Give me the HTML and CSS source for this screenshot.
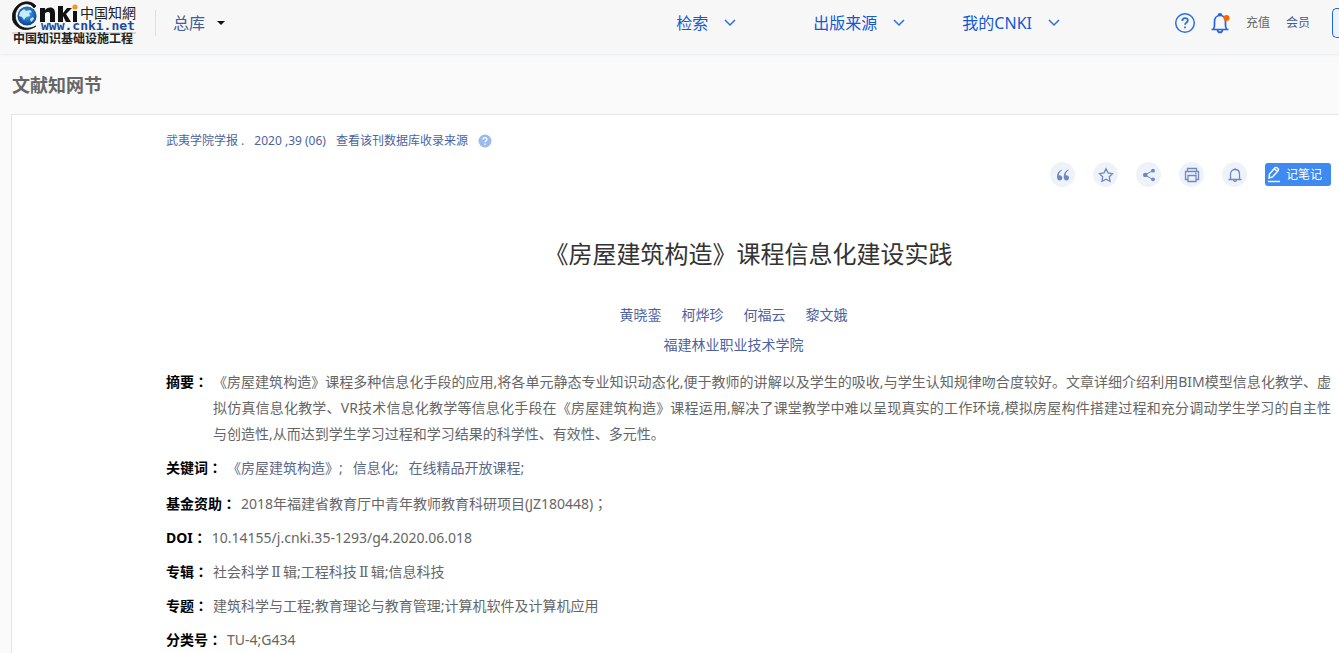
FILE: index.html
```html
<!DOCTYPE html>
<html lang="zh-CN">
<head>
<meta charset="utf-8">
<title>《房屋建筑构造》课程信息化建设实践</title>
<link rel="stylesheet" href="styles.css">
</head>
<body>
<header class="topbar">
  <a class="logo" href="#" aria-label="中国知网">
    <svg width="128" height="46" viewBox="0 0 128 46">
      <defs><radialGradient id="globe" cx="50%" cy="40%" r="60%"><stop offset="0" stop-color="#5fbdf0"/><stop offset=".5" stop-color="#2273c4"/><stop offset="1" stop-color="#0c3f92"/></radialGradient></defs>
      <path d="M24 6C20 1 11 0 5 6C-2 13-1 23 6 27C11 31 19 30 24 26C18 29 11 29 7 25C2 20 2 12 7 7C12 2 19 3 22 8Z" fill="#111" stroke="#111" stroke-width=".8"/>
      <circle cx="15" cy="16" r="9.600" fill="url(#globe)"/>
      <path d="M8 12l4-3 2 2 4-1 2 2-3 1 1 3-4 1-2 3-2-3-3-1zM18 19l3-2 1 2-3 3z" fill="#c9eafa"/>
      <path d="M28 22V8h5v2c4-4 10-3 10 3v9h-5v-8c0-3-5-2-5 0v8zM46 6h5v7l4-5h5l-6 6 5 8h-5l-3-6v6h-5zM61 11h4v11h-4z" fill="#111"/>
      <circle cx="63" cy="7" r="2.600" fill="#f39a1c"/>
      <text class="logo-brush" x="68" y="18">中国知網</text>
      <text class="logo-url" x="29" y="30">www.cnki.net</text>
      <path d="M0 33H124" stroke="#bbb"/>
      <text class="logo-sub" x="1" y="43">中国知识基础设施工程</text>
    </svg>
  </a>
  <button class="library" type="button">总库<span class="caret"></span></button>
  <nav class="menu">
    <a href="#">检索<svg width="14" height="10" viewBox="0 0 14 10"><path d="M2 2l5 5 5-5"/></svg></a>
    <a href="#">出版来源<svg width="14" height="10" viewBox="0 0 14 10"><path d="M2 2l5 5 5-5"/></svg></a>
    <a class="mine" href="#">我的CNKI<svg width="14" height="10" viewBox="0 0 14 10"><path d="M2 2l5 5 5-5"/></svg></a>
  </nav>
  <div class="account">
    <button type="button" class="plain" aria-label="帮助"><svg width="22" height="22" viewBox="0 0 22 22" fill="none" stroke="#2c6fe0" stroke-width="1.500"><circle cx="11" cy="11" r="9.300"/><path d="M8.300 9c0-4 5.500-3.500 5.500-.5 0 2-2.800 2-2.800 4.300" stroke-width="1.800"/><path d="M11 14.500v1.800" stroke-width="1.800"/></svg></button>
    <button type="button" class="plain" aria-label="消息"><svg width="20" height="22" viewBox="0 0 20 22" fill="none" stroke="#1f66e5" stroke-width="1.700"><path d="M1.500 17.500h17M3.500 17c1.500-2 1-4 1-7.500 0-3.500 2-6 5.500-6s5.500 2.500 5.500 6c0 3.500-.5 5.500 1 7.500M8.500 3.300a1.500 1.500 0 0 1 3 0M7.500 18c.5 3.200 4.500 3.200 5 0"/><circle cx="16.500" cy="6" r="3" fill="#ff6400" stroke="none"/></svg></button>
    <a href="#">充值</a>
    <a class="member" href="#">会员</a>
  </div>
  <button class="login" type="button" aria-label="登录"></button>
</header>
<h1 class="page-name">文献知网节</h1>
<main class="paper">
  <p class="source"><a href="#">武夷学院学报 .</a><a href="#">2020 ,39 (06)</a><a href="#">查看该刊数据库收录来源</a>
    <svg width="14" height="14" viewBox="0 0 14 14"><circle cx="7" cy="7" r="6.500" fill="#9dbbea"/><path d="M5 5.600c0-2.800 4-2.500 4-.3C9 6.700 7 6.700 7 8.300M7 9.500V11" fill="none" stroke="#fff" stroke-width="1.300"/></svg></p>
  <div class="tools">
    <button type="button" aria-label="引用"><svg width="16" height="16" viewBox="0 0 16 16" fill="#6d88c3"><path d="M7 2.500C4 3.500 2 6 2 9.500 2 12 3 13.500 4.700 13.500S7.300 12.300 7.300 10.800 6.300 8.200 4.500 8.200C4.200 8.200 4 8.300 3.800 8.400 4 6.200 5 4.500 7 3.300zM13.700 2.500c-3 1-5 3.500-5 7 0 2.500 1 4 2.700 4s2.600-1.200 2.600-2.700-1-2.600-2.800-2.600c-.3 0-.5.100-.7.200.2-2.200 1.200-3.900 3.200-5.100z"/></svg></button>
    <button type="button" aria-label="收藏"><svg width="16" height="16" viewBox="0 0 16 16" class="line"><path d="M8 1.800l2 4.100 4.500.7-3.200 3.200.7 4.500-4-2.100-4 2.100.7-4.500L1.500 6.600 6 5.900z"/></svg></button>
    <button type="button" aria-label="分享"><svg width="16" height="16" viewBox="0 0 16 16" class="line"><path d="M12 3.500L4 8l8 4.500" stroke-width="1"/><g fill="#6d88c3" stroke="none"><circle cx="4.300" cy="8" r="2.300"/><circle cx="12" cy="3.700" r="1.900"/><circle cx="12" cy="12.300" r="1.900"/></g></svg></button>
    <button type="button" aria-label="打印"><svg width="16" height="16" viewBox="0 0 16 16" class="line"><path d="M3.500 4.500v-3h9v3M4 12.500H1.500v-8h13v8H12M4 8.500h8v6H4zM11 6.500h1.500"/></svg></button>
    <button type="button" aria-label="提醒"><svg width="16" height="16" viewBox="0 0 16 16" class="line"><path d="M1.500 12.500h13M3.500 12V7c0-6 9-6 9 0v5M6.500 13c.3 2 2.700 2 3 0M8 1v1.500"/></svg></button>
    <button type="button" class="note"><svg width="16" height="18" viewBox="0 0 16 18" fill="none" stroke="#fff" stroke-width="1.400"><path d="M3 12l.5-4L9 1.800c1.200-1.200 4.500 1.200 3.300 2.700L6.500 11zM8.500 3l3 2.500"/><path d="M2 15.500h12"/></svg>记笔记</button>
  </div>
  <div class="article">
    <h2>《房屋建筑构造》课程信息化建设实践</h2>
    <p class="authors"><a href="#">黄晓銮</a><a href="#">柯烨珍</a><a href="#">何福云</a><a href="#">黎文娥</a></p>
    <p class="school"><a href="#">福建林业职业技术学院</a></p>
  </div>
  <dl class="facts">
    <div class="abstract"><dt>摘要<span class="mark" lang="zh-Hant">：</span></dt><dd>《房屋建筑构造》课程多种信息化手段的应用,将各单元静态专业知识动态化,便于教师的讲解以及学生的吸收,与学生认知规律吻合度较好。文章详细介绍利用BIM模型信息化教学、虚拟仿真信息化教学、VR技术信息化教学等信息化手段在《房屋建筑构造》课程运用,解决了课堂教学中难以呈现真实的工作环境,模拟房屋构件搭建过程和充分调动学生学习的自主性<span class="together">与创造性</span>,从而达到学生学习过程和学习结果的科学性、有效性、多元性。</dd></div>
    <div class="keywords"><dt>关键词<span class="mark" lang="zh-Hant">：</span></dt><dd><a href="#">《房屋建筑构造》;</a><a href="#">信息化;</a><a href="#">在线精品开放课程;</a></dd></div>
    <div><dt>基金资助<span class="mark" lang="zh-Hant">：</span></dt><dd>2018年福建省教育厅中青年教师教育科研项目(JZ180448)<span class="mark" lang="zh-Hant">；</span></dd></div>
    <div><dt>DOI<span class="mark" lang="zh-Hant">：</span></dt><dd>10.14155/j.cnki.35-1293/g4.2020.06.018</dd></div>
    <div><dt>专辑<span class="mark" lang="zh-Hant">：</span></dt><dd>社会科学<span class="numeral">Ⅱ</span>辑;工程科技<span class="numeral">Ⅱ</span>辑;信息科技</dd></div>
    <div><dt>专题<span class="mark" lang="zh-Hant">：</span></dt><dd>建筑科学与工程;教育理论与教育管理;计算机软件及计算机应用</dd></div>
    <div><dt>分类号<span class="mark" lang="zh-Hant">：</span></dt><dd>TU-4;G434</dd></div>
  </dl>
</main>
</body>
</html>
```
FILE: styles.css
```css
* { box-sizing: border-box; margin: 0; padding: 0; }
body { background: #fafafa; color: #666; font: 14px/26px "Noto Sans", "Noto Sans CJK SC", sans-serif; overflow: hidden; }
a { color: inherit; text-decoration: none; }
button { font: inherit; border: 0; background: none; color: inherit; }
.topbar { height: 54px; display: flex; align-items: flex-start; background: #f7f7f7; box-shadow: 0 1px 3px #e6eaf5; padding-left: 12px; }
.logo { height: 46px; }
.logo svg { display: block; }
.logo-brush { font: 14px "Noto Sans CJK TC", sans-serif; fill: #222; }
.logo-url { font: bold 13px "DejaVu Sans Mono", monospace; fill: #1c4ba0; }
.logo-sub { font: bold 12px "Noto Sans CJK SC", sans-serif; fill: #222; }
.library { display: flex; align-items: center; gap: 12px; margin: 10px 0 0 15px; padding-left: 17px; border-left: 1px solid #cfe0f7; font-size: 16px; color: #435c9c; }
.caret { border: 4px solid transparent; border-top-color: #111; border-bottom: 0; }
.menu { display: flex; gap: 76px; margin: 10px 0 0 auto; font-size: 16px; color: #1458d4; }
.menu a { display: flex; align-items: center; gap: 15px; }
.menu .mine { margin-left: -20px; }
.menu path { fill: none; stroke: #2c6fe0; stroke-width: 1.5; }
.account { display: flex; align-items: center; gap: 16px; height: 46px; margin-left: 113px; font-size: 12px; }
.account svg, .tools svg { display: block; }
.plain + .plain { margin-left: -2px; }
.member { color: #435c9c; }
.login { width: 7px; height: 30px; margin: 8px 0 0 22px; border: 1px solid #1f66e5; border-right: 0; border-radius: 5px 0 0 5px; background: #edf3fd; flex: none; }
.page-name { padding: 18px 12px 16px; font-size: 18px; line-height: 26px; color: #666; }
.paper { margin-left: 11px; padding: 16px 8px 0 154px; background: #fff; border: 1px solid #e6e6e6; border-right: 0; min-height: calc(100vh - 114px); }
.source { display: flex; align-items: center; gap: 10px; font-size: 12px; line-height: 20px; color: #4c639f; }
.tools { display: flex; align-items: center; gap: 18px; justify-content: flex-end; margin-top: 11px; }
.tools button { width: 25px; height: 25px; border-radius: 50%; background: #eef2f9; display: flex; align-items: center; justify-content: center; }
.line { fill: none; stroke: #6d88c3; stroke-width: 1.3; }
.tools .note { width: 66px; height: 23px; border-radius: 3px; background: #3e8af2; color: #fff; font-size: 12px; gap: 4px; padding-left: 1px; justify-content: flex-start; }
.article { text-align: center; }
h2 { margin-top: 49px; font-size: 24px; font-weight: 400; line-height: 36px; color: #333; }
.authors, .school { padding-right: 30px; color: #4c639f; }
.authors { display: flex; justify-content: center; gap: 20px; margin-top: 30px; }
.school { margin-top: 4px; }
.facts { margin-top: 11px; }
.facts > div { display: flex; gap: 5px; margin-bottom: 8px; }
dt { flex: none; font-weight: 700; color: #000; }
.abstract dd { text-align: justify; }
.together { white-space: nowrap; }
.mark { font-family: "Noto Sans CJK TC", sans-serif; line-height: 1; }
.numeral { display: inline-block; width: 14px; text-align: center; font-family: "DejaVu Serif", serif; line-height: 1; }
.facts .keywords { margin-bottom: 10px; }
.keywords dd { display: flex; gap: 10px; color: #5c6785; }
```
